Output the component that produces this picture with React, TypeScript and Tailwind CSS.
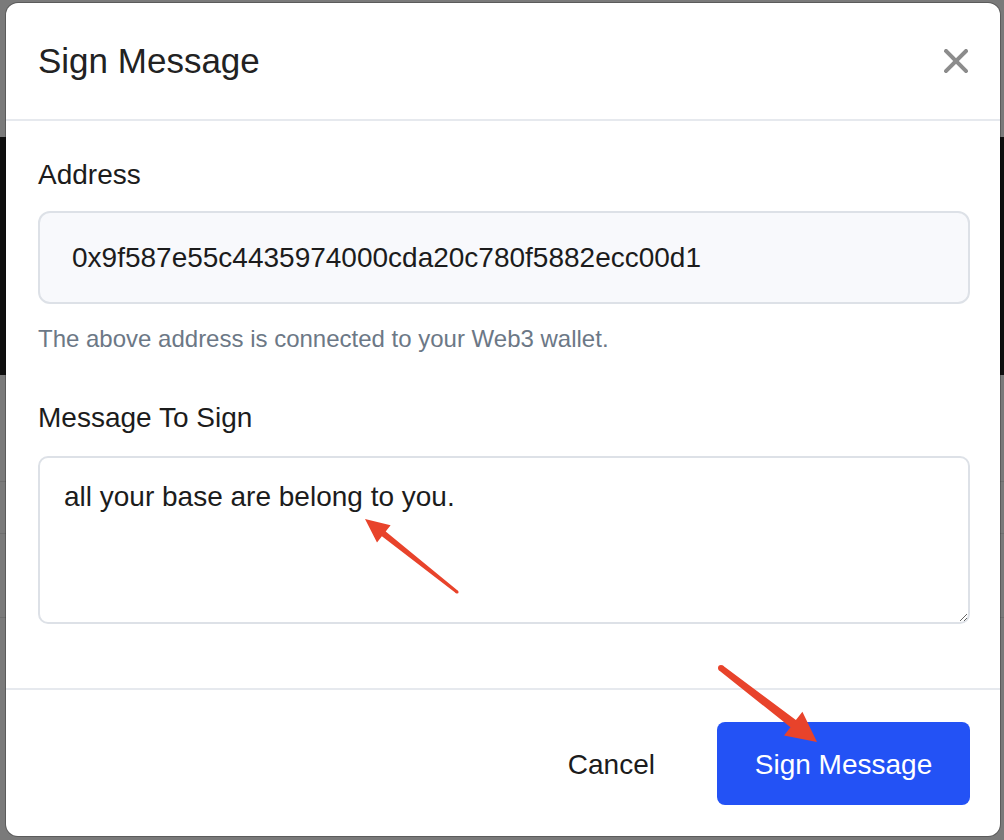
import React from "react";

const font = { fontFamily: '"Liberation Sans", Arial, sans-serif' };

function CloseIcon() {
  return (
    <svg width="24" height="24" viewBox="0 0 24 24" aria-hidden="true">
      <line x1="2" y1="2" x2="22" y2="22" stroke="#8c8c8c" strokeWidth="4" strokeLinecap="square" />
      <line x1="22" y1="2" x2="2" y2="22" stroke="#8c8c8c" strokeWidth="4" strokeLinecap="square" />
    </svg>
  );
}

// red annotation arrows drawn over the screenshot
function Arrows() {
  return (
    <svg
      aria-hidden="true"
      className="pointer-events-none absolute inset-0 h-full w-full"
      viewBox="0 0 1004 840"
    >
      <polygon
        fill="#e8432b"
        points="457.9,590.8 385.7,531.6 390.6,525.3 365,519 377,542.5 381.9,536.2 456.1,593.2"
      />
      <circle cx="457" cy="592" r="1.6" fill="#e8432b" />
      <polygon
        fill="#e8432b"
        points="719.2,670.4 790.5,727.3 784,735.6 817,742 802.4,711.8 795.9,720.1 722.8,665.6"
      />
      <circle cx="721" cy="668" r="3" fill="#e8432b" />
    </svg>
  );
}

export default function App() {
  return (
    <div className="relative h-[840px] w-[1004px] overflow-hidden bg-[#7a7a7a]" style={font}>
      {/* page behind the overlay */}
      <div className="flex flex-col">
        <div className="h-[137px]" />
        <div className="h-[238px] bg-[#0e0e0e]" />
        <div className="h-[107px] border-b border-[#6e6e6e]" />
        <div className="h-[52px] border-b border-[#6e6e6e]" />
        <div className="h-[84px] border-b border-[#6e6e6e]" />
      </div>

      {/* modal */}
      <div className="absolute left-[6px] top-[3px] flex h-[833px] w-[994px] flex-col rounded-[12px] bg-white shadow-[0_0_0_1px_rgba(0,0,0,0.25)]">
        <div className="flex h-[118px] items-center justify-between border-b-2 border-[#e6e9ee] pl-[32px] pr-[32px]">
          <h2 className="text-[35px] leading-[42px] text-[#222]">Sign Message</h2>
          <button className="flex h-6 w-6 items-center justify-center">
            <CloseIcon />
          </button>
        </div>

        <div className="flex flex-col pb-[64px] pl-[32px] pr-[30px] pt-[37px]">
          <label className="text-[28px] leading-[34px] text-[#1c1c1c]">Address</label>
          <input
            readOnly
            value="0x9f587e55c4435974000cda20c780f5882ecc00d1"
            className="mt-[19px] h-[93px] w-full rounded-[12px] border-2 border-[#dde1e7] bg-[#f8f9fc] pl-[32px] text-[28px] text-[#1c1c1c] outline-none"
            style={font}
          />
          <p className="mt-[20px] text-[24px] leading-[29px] text-[#6c7886]">
            The above address is connected to your Web3 wallet.
          </p>
          <label className="mt-[48px] text-[28px] leading-[34px] text-[#1c1c1c]">Message To Sign</label>
          <textarea
            defaultValue="all your base are belong to you."
            className="mt-[21px] h-[168px] w-full rounded-[10px] border-2 border-[#dde1e7] bg-white pl-[24px] pr-[24px] pt-[22px] text-[28px] leading-[34px] text-[#1c1c1c] outline-none"
            style={font}
          />
        </div>

        <div className="flex flex-1 items-center justify-end gap-[30px] border-t-2 border-[#e6e9ee] pr-[30px]">
          <button className="h-[83px] px-8 pt-[4px] text-[28px] text-[#1c1c1c]">Cancel</button>
          <button className="h-[83px] w-[253px] rounded-[8px] bg-[#2352f5] pt-[4px] text-[28px] text-white">
            Sign Message
          </button>
        </div>
      </div>

      <Arrows />
    </div>
  );
}
